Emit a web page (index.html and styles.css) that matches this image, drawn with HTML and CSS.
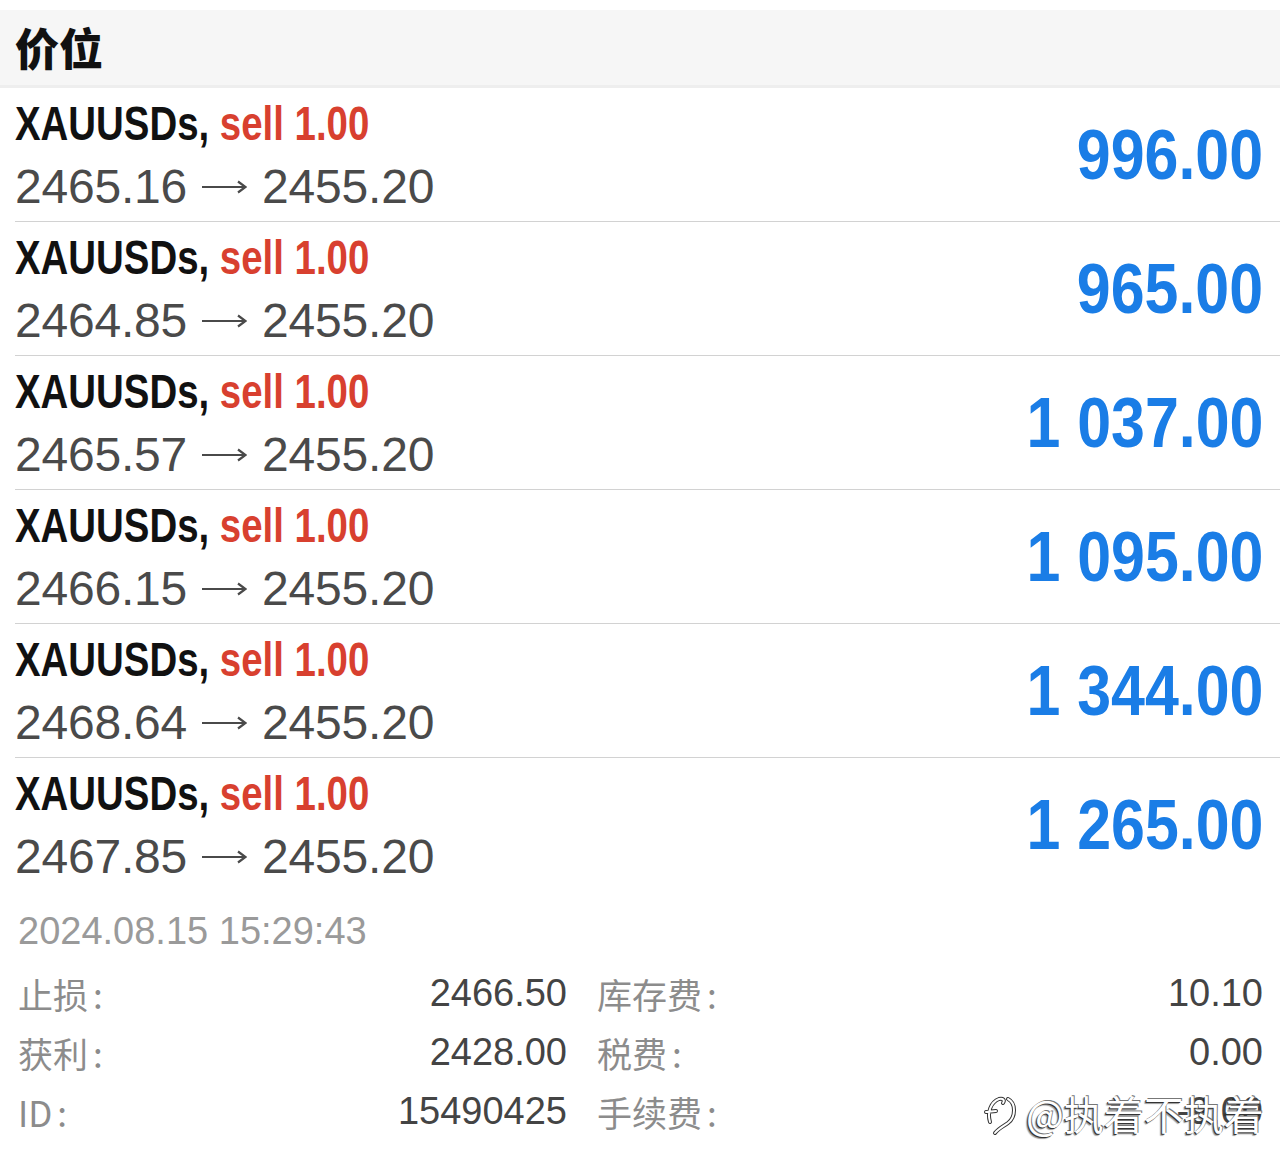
FILE: index.html
```html
<!DOCTYPE html>
<html lang="zh-CN">
<head>
    <meta charset="UTF-8">
    <meta name="viewport" content="width=device-width, initial-scale=1.0">
    <title>价位</title>
    <link rel="stylesheet" href="styles.css">
</head>
<body>
    <div class="section-head">价位</div>

    <ul class="positions">
        <li class="position">
            <div class="info">
                <div class="symbol">XAUUSDs, <span class="side">sell 1.00</span></div>
                <div class="prices">2465.16<svg class="arrow" width="46" height="14" viewBox="0 0 46 14"><path d="M1 7 H44 M37 1.5 L44.5 7 L37 12.5" fill="none" stroke="#4a4a4a" stroke-width="2.2"/></svg>2455.20</div>
            </div>
            <div class="profit">996.00</div>
        </li>
        <li class="position">
            <div class="info">
                <div class="symbol">XAUUSDs, <span class="side">sell 1.00</span></div>
                <div class="prices">2464.85<svg class="arrow" width="46" height="14" viewBox="0 0 46 14"><path d="M1 7 H44 M37 1.5 L44.5 7 L37 12.5" fill="none" stroke="#4a4a4a" stroke-width="2.2"/></svg>2455.20</div>
            </div>
            <div class="profit">965.00</div>
        </li>
        <li class="position">
            <div class="info">
                <div class="symbol">XAUUSDs, <span class="side">sell 1.00</span></div>
                <div class="prices">2465.57<svg class="arrow" width="46" height="14" viewBox="0 0 46 14"><path d="M1 7 H44 M37 1.5 L44.5 7 L37 12.5" fill="none" stroke="#4a4a4a" stroke-width="2.2"/></svg>2455.20</div>
            </div>
            <div class="profit">1 037.00</div>
        </li>
        <li class="position">
            <div class="info">
                <div class="symbol">XAUUSDs, <span class="side">sell 1.00</span></div>
                <div class="prices">2466.15<svg class="arrow" width="46" height="14" viewBox="0 0 46 14"><path d="M1 7 H44 M37 1.5 L44.5 7 L37 12.5" fill="none" stroke="#4a4a4a" stroke-width="2.2"/></svg>2455.20</div>
            </div>
            <div class="profit">1 095.00</div>
        </li>
        <li class="position">
            <div class="info">
                <div class="symbol">XAUUSDs, <span class="side">sell 1.00</span></div>
                <div class="prices">2468.64<svg class="arrow" width="46" height="14" viewBox="0 0 46 14"><path d="M1 7 H44 M37 1.5 L44.5 7 L37 12.5" fill="none" stroke="#4a4a4a" stroke-width="2.2"/></svg>2455.20</div>
            </div>
            <div class="profit">1 344.00</div>
        </li>
        <li class="position">
            <div class="info">
                <div class="symbol">XAUUSDs, <span class="side">sell 1.00</span></div>
                <div class="prices">2467.85<svg class="arrow" width="46" height="14" viewBox="0 0 46 14"><path d="M1 7 H44 M37 1.5 L44.5 7 L37 12.5" fill="none" stroke="#4a4a4a" stroke-width="2.2"/></svg>2455.20</div>
            </div>
            <div class="profit">1 265.00</div>
        </li>
    </ul>

    <div class="details">
        <div class="time">2024.08.15 15:29:43</div>
        <div class="grid">
            <div class="field"><span class="label">止损<span class="colon">:</span></span><span class="value">2466.50</span></div>
            <div class="field"><span class="label">库存费<span class="colon">:</span></span><span class="value">10.10</span></div>
            <div class="field"><span class="label">获利<span class="colon">:</span></span><span class="value">2428.00</span></div>
            <div class="field"><span class="label">税费<span class="colon">:</span></span><span class="value">0.00</span></div>
            <div class="field"><span class="label">ID<span class="colon">:</span></span><span class="value">15490425</span></div>
            <div class="field"><span class="label">手续费<span class="colon">:</span></span><span class="value">-9.00</span></div>
        </div>
    </div>

    <div class="watermark">
        <svg class="mark-icon" width="38" height="46" viewBox="0 0 38 46">
            <g fill="none" stroke-linecap="round">
                <path d="M8 32 C5 22 9 12 17 9 C21 8 23 10 21 13 M4 22 L14 21" stroke="#333" stroke-width="4"/>
                <path d="M26 9 C34 13 34 27 26 33 C22 36 17 38 13 43" stroke="#333" stroke-width="4"/>
                <path d="M8 32 C5 22 9 12 17 9 C21 8 23 10 21 13 M4 22 L14 21" stroke="#fff" stroke-width="2"/>
                <path d="M26 9 C34 13 34 27 26 33 C22 36 17 38 13 43" stroke="#fff" stroke-width="2"/>
            </g>
        </svg>
        <span class="mark-text">@执着不执着</span>
    </div>
</body>
</html>
```

FILE: styles.css
```css
body {
    margin: 0;
    background-color: #fff;
    font-family: "Liberation Sans", Arial, "Noto Sans CJK SC", sans-serif;
    position: relative;
}
.section-head {
    margin-top: 10px;
    height: 75px;
    line-height: 75px;
    padding-left: 15px;
    background-color: #f6f6f6;
    border-bottom: 3px solid #eeeeee;
    font-family: "Noto Sans CJK SC", sans-serif;
    font-size: 44px;
    font-weight: 900;
    color: #111;
}
.positions {
    list-style-type: none;
    margin: 0 0 0 15px;
    padding: 0;
}
.position {
    display: flex;
    justify-content: space-between;
    align-items: center;
    padding: 4px 17px 3px 0;
    border-bottom: 1px solid #d2d2d2;
}
.position:last-child {
    border-bottom-color: transparent;
}
.info {
    font-size: 48px;
    line-height: 63px;
}
/* no condensed face installed, so the bold lines are narrowed by hand */
.symbol {
    display: inline-block;
    vertical-align: top;
    white-space: nowrap;
    font-weight: bold;
    color: #111;
    transform: scaleX(0.8);
    transform-origin: left center;
}
.side {
    color: #d8402f;
}
.prices {
    height: 63px;
    color: #4a4a4a;
    letter-spacing: -0.2px;
}
.arrow {
    margin: 0 15px 0 14px;
    vertical-align: 9px;
}
.profit {
    display: inline-block;
    white-space: nowrap;
    font-weight: bold;
    font-size: 70px;
    color: #1a7de6;
    transform: scaleX(0.87);
    transform-origin: right center;
}
.details {
    padding: 19px 17px 0 18px;
}
.time {
    font-size: 38px;
    line-height: 40px;
    color: #9a9a9a;
}
.grid {
    margin-top: 13px;
    display: grid;
    grid-template-columns: 549px 1fr;
    column-gap: 30px;
}
.field {
    display: flex;
    justify-content: space-between;
    line-height: 59px;
}
.label {
    font-family: "Noto Sans CJK SC", sans-serif;
    font-size: 35px;
    color: #8c8c8c;
}
.colon {
    margin-left: 5px;
}
.value {
    font-size: 38px;
    color: #444;
}
.watermark {
    position: absolute;
    left: 982px;
    top: 1084px;
    display: flex;
    align-items: center;
    gap: 6px;
    font-family: "Noto Sans CJK SC", sans-serif;
    font-size: 40px;
    color: #fff;
    text-shadow: -1px 1px 0 #333, 1px -1px 0 #777, -2px 2px 1px rgba(0, 0, 0, 0.4);
}
.mark-icon {
    flex-shrink: 0;
}
```
